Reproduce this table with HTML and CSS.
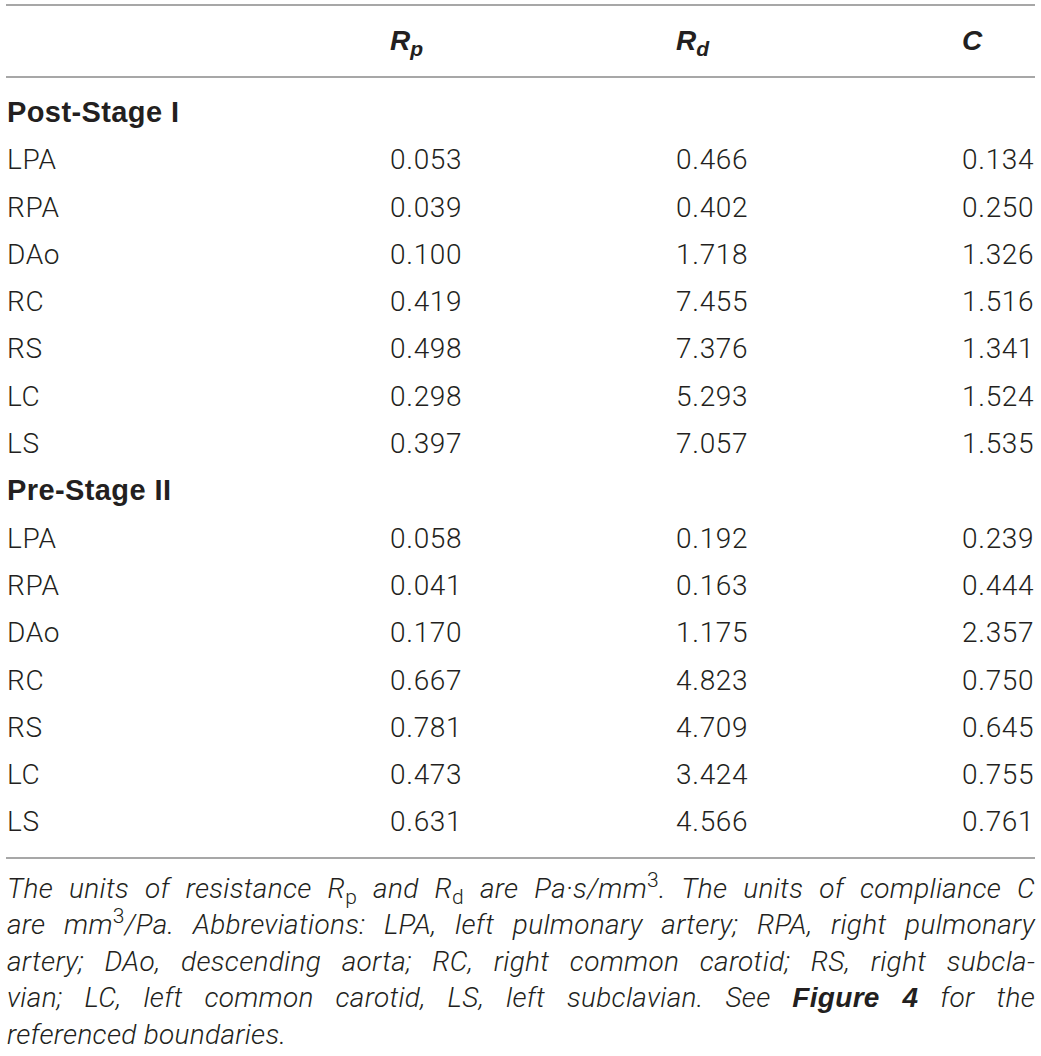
FILE: index.html
```html
<!DOCTYPE html>
<html>
<head>
<meta charset="utf-8">
<link rel="stylesheet" href="styles.css">
</head>
<body>
<div class="page">
  <div class="table">
    <div class="row head">
      <div class="cell label"></div>
      <div class="cell"><span class="sym">R<sub>p</sub></span></div>
      <div class="cell"><span class="sym">R<sub>d</sub></span></div>
      <div class="cell"><span class="sym">C</span></div>
    </div>
    <div class="body">
      <div class="row section"><div class="cell label">Post-Stage I</div></div>
      <div class="row"><div class="cell label">LPA</div><div class="cell">0.053</div><div class="cell">0.466</div><div class="cell">0.134</div></div>
      <div class="row"><div class="cell label">RPA</div><div class="cell">0.039</div><div class="cell">0.402</div><div class="cell">0.250</div></div>
      <div class="row"><div class="cell label">DAo</div><div class="cell">0.100</div><div class="cell">1.718</div><div class="cell">1.326</div></div>
      <div class="row"><div class="cell label">RC</div><div class="cell">0.419</div><div class="cell">7.455</div><div class="cell">1.516</div></div>
      <div class="row"><div class="cell label">RS</div><div class="cell">0.498</div><div class="cell">7.376</div><div class="cell">1.341</div></div>
      <div class="row"><div class="cell label">LC</div><div class="cell">0.298</div><div class="cell">5.293</div><div class="cell">1.524</div></div>
      <div class="row"><div class="cell label">LS</div><div class="cell">0.397</div><div class="cell">7.057</div><div class="cell">1.535</div></div>
      <div class="row section"><div class="cell label">Pre-Stage II</div></div>
      <div class="row"><div class="cell label">LPA</div><div class="cell">0.058</div><div class="cell">0.192</div><div class="cell">0.239</div></div>
      <div class="row"><div class="cell label">RPA</div><div class="cell">0.041</div><div class="cell">0.163</div><div class="cell">0.444</div></div>
      <div class="row"><div class="cell label">DAo</div><div class="cell">0.170</div><div class="cell">1.175</div><div class="cell">2.357</div></div>
      <div class="row"><div class="cell label">RC</div><div class="cell">0.667</div><div class="cell">4.823</div><div class="cell">0.750</div></div>
      <div class="row"><div class="cell label">RS</div><div class="cell">0.781</div><div class="cell">4.709</div><div class="cell">0.645</div></div>
      <div class="row"><div class="cell label">LC</div><div class="cell">0.473</div><div class="cell">3.424</div><div class="cell">0.755</div></div>
      <div class="row"><div class="cell label">LS</div><div class="cell">0.631</div><div class="cell">4.566</div><div class="cell">0.761</div></div>
    </div>
  </div>
  <p class="note">
    <span class="line">The units of resistance R<sub class="up">p</sub> and R<sub class="up">d</sub> are Pa·s/mm<sup>3</sup>. The units of compliance C</span>
    <span class="line">are mm<sup>3</sup>/Pa. Abbreviations: LPA, left pulmonary artery; RPA, right pulmonary</span>
    <span class="line">artery; DAo, descending aorta; RC, right common carotid; RS, right subcla-</span>
    <span class="line">vian; LC, left common carotid, LS, left subclavian. See <b>Figure 4</b> for the</span>
    <span class="line last">referenced boundaries.</span>
  </p>
</div>
</body>
</html>
```
FILE: styles.css
```css
html, body {
  margin: 0;
  padding: 0;
  background: #ffffff;
}
.page {
  width: 1029px;
  margin-left: 6px;
  padding-top: 4px;
  font-family: Roboto, "Liberation Sans", sans-serif;
  font-weight: 300;
  color: #231f20;
}
.table {
  border-top: 2px solid #a7a7a7;
  border-bottom: 2px solid #a7a7a7;
}
.row {
  display: grid;
  grid-template-columns: 384px 286px 286px 1fr;
  font-size: 28px;
  line-height: 47.3px;
  letter-spacing: 0.7px;
}
.cell.label {
  padding-left: 1px;
}
.head {
  height: 70px;
  align-items: center;
  border-bottom: 2px solid #a7a7a7;
  line-height: 30px;
  letter-spacing: 0;
}
.sym {
  font-family: "Liberation Sans", Arial, sans-serif;
  font-weight: 700;
  font-style: italic;
  font-size: 28px;
}
.sym sub {
  font-size: 21px;
  vertical-align: -6px;
  line-height: 0;
}
.body {
  padding: 11px 0 11px;
}
.section .label {
  font-family: "Liberation Sans", Arial, sans-serif;
  font-weight: 700;
  font-size: 29px;
  letter-spacing: 0.4px;
  grid-column: 1 / 3;
}
.note {
  margin: 12px 0 0;
  font-style: italic;
  font-size: 28px;
  line-height: 36.5px;
  padding-left: 1px;
  letter-spacing: 0.3px;
}
.line {
  display: block;
  text-align: justify;
  text-align-last: justify;
  white-space: nowrap;
}
.line.last {
  text-align-last: left;
}
.note sub.up, .note sup {
  font-style: normal;
  font-size: 21px;
  line-height: 0;
}
.note sub.up {
  vertical-align: -6px;
}
.note sup {
  vertical-align: 11px;
}
.note b {
  font-family: "Liberation Sans", Arial, sans-serif;
  font-weight: 700;
  font-size: 28px;
}
```
